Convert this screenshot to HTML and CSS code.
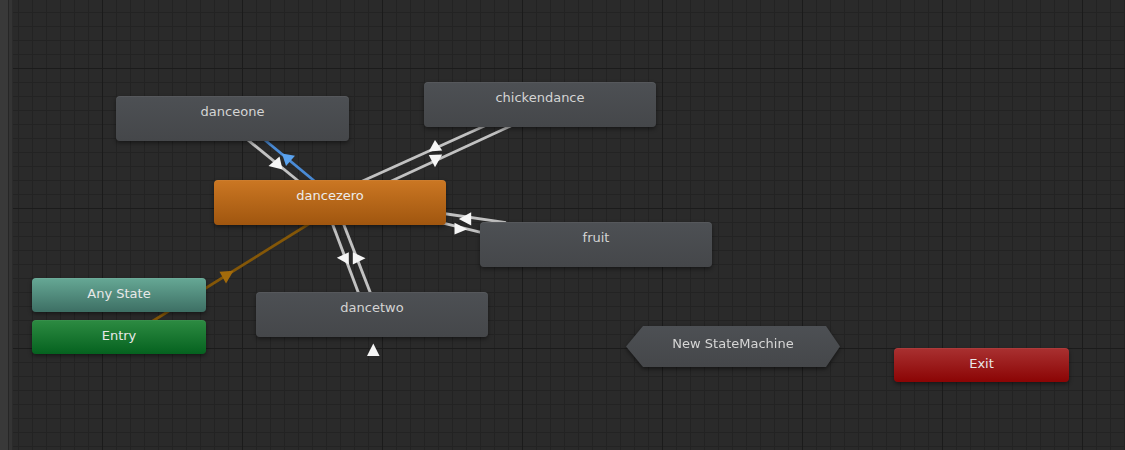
FILE: index.html
```html
<!DOCTYPE html>
<html lang="en">
<head>
<meta charset="utf-8">
<title>Animator</title>
<link rel="stylesheet" href="styles.css">
</head>
<body>
<div class="window">
  <div class="sidebar"></div>
  <div class="canvas">
    <svg class="edges" width="1112" height="450" viewBox="13 0 1112 450" xmlns="http://www.w3.org/2000/svg">
      <g class="line-gray">
        <line x1="243" y1="136" x2="302" y2="184"/>
        <line x1="356" y1="184" x2="491" y2="123"/>
        <line x1="385" y1="184" x2="517" y2="123"/>
        <line x1="440" y1="213" x2="506" y2="222.6"/>
        <line x1="430" y1="219.8" x2="486" y2="233.6"/>
        <line x1="331" y1="220" x2="360" y2="297"/>
        <line x1="342" y1="220" x2="372" y2="297"/>
      </g>
      <line class="line-blue" x1="260" y1="136" x2="318" y2="184"/>
      <line class="line-orange" x1="312" y1="222" x2="148" y2="324"/>
      <g class="arrow-white">
        <polygon points="268.5,166 279.5,156.5 282.5,169.5"/>
        <polygon points="428.8,151.5 435,140 442.2,150.5"/>
        <polygon points="428.8,155 442.2,154.4 435,167.2"/>
        <polygon points="458.8,219 471.2,212.2 471.2,225.5"/>
        <polygon points="454.5,222.8 454.5,234.5 467.2,229.3"/>
        <polygon points="336.8,257.8 348.8,252.2 348.8,264.5"/>
        <polygon points="365.5,258.3 352.8,252.2 352.8,264.5"/>
        <polygon points="373.3,343.5 367,356 379.6,356"/>
      </g>
      <polygon class="arrow-blue" points="282,153.5 295,155.8 286,166"/>
      <polygon class="arrow-orange" points="219.5,271.8 233.5,270.8 226,283.5"/>
    </svg>

    <div class="node state" style="left:103px;top:96px;width:233px">danceone</div>
    <div class="node state" style="left:411px;top:82px">chickendance</div>
    <div class="node state default" style="left:201px;top:180px">dancezero</div>
    <div class="node state" style="left:467px;top:222px">fruit</div>
    <div class="node state" style="left:243px;top:292px">dancetwo</div>
    <div class="node small any" style="left:19px;top:278px">Any State</div>
    <div class="node small entry" style="left:19px;top:320px">Entry</div>
    <div class="node small exit" style="left:881px;top:348px;width:175px">Exit</div>
    <div class="machine-wrap" style="left:613px;top:326px">
      <div class="machine">New StateMachine</div>
    </div>
  </div>
</div>
</body>
</html>
```
FILE: styles.css
```css
* { box-sizing: border-box; }
html, body {
  margin: 0;
  padding: 0;
  width: 1125px;
  height: 450px;
  overflow: hidden;
  background: #2a2a2a;
  font-family: "DejaVu Sans", "Verdana", sans-serif;
}
.window {
  display: flex;
  width: 1125px;
  height: 450px;
}
.sidebar {
  width: 13px;
  flex: 0 0 13px;
  background: linear-gradient(to right,
    #393939 0, #393939 8px,
    #262626 8px, #262626 9px,
    #343434 9px, #343434 12px,
    #2b2b2b 12px, #2b2b2b 13px);
}
.canvas {
  position: relative;
  flex: 1;
  height: 450px;
  background-color: #2a2a2a;
  background-image:
    linear-gradient(to right, #1b1b1b 0, #1b1b1b 1px, transparent 1px),
    linear-gradient(to bottom, #1b1b1b 0, #1b1b1b 1px, transparent 1px),
    linear-gradient(to right, #232323 0, #232323 1px, transparent 1px),
    linear-gradient(to bottom, #232323 0, #232323 1px, transparent 1px);
  background-size: 140px 140px, 140px 140px, 14px 14px, 14px 14px;
  background-position: 89px 68px, 89px 68px, 89px 68px, 89px 68px;
  overflow: hidden;
}
.edges {
  position: absolute;
  left: 0;
  top: 0;
}
.line-gray line {
  stroke: #c2c2c2;
  stroke-width: 2.9;
}
.line-blue {
  stroke: #4a8bd6;
  stroke-width: 2.9;
}
.line-orange {
  stroke: #845708;
  stroke-width: 2.7;
}
.arrow-white polygon { fill: #f6f6f6; }
.arrow-blue { fill: #5aa2ee; }
.arrow-orange { fill: #a36b0b; }

.node {
  position: absolute;
  border-radius: 4px;
  text-align: center;
  font-size: 13px;
  line-height: 16px;
  padding-top: 8px;
  box-shadow: 0 2px 4px rgba(0, 0, 0, 0.45), inset 0 1px 0 rgba(255, 255, 255, 0.05);
}
.state {
  width: 232px;
  height: 45px;
  color: #d4d4d4;
  background: linear-gradient(to bottom, #4d5054 0, #45474a 100%);
}
.state.default {
  color: #ececec;
  background: linear-gradient(to bottom, #cb7723 0, #a0560f 100%);
}
.small {
  width: 174px;
  height: 34px;
  color: #e8e8e8;
}
.any {
  background: linear-gradient(to bottom, #66a895 0, #3d6f64 100%);
}
.entry {
  background: linear-gradient(to bottom, #2d8b42 0, #05621f 100%);
}
.exit {
  background: linear-gradient(to bottom, #a93131 0, #8b0404 100%);
}
.machine-wrap {
  position: absolute;
  width: 214px;
  height: 41px;
  filter: drop-shadow(0 2px 2px rgba(0, 0, 0, 0.5));
}
.machine {
  width: 214px;
  height: 41px;
  padding-top: 10px;
  text-align: center;
  font-size: 13px;
  line-height: 16px;
  color: #d6d6d6;
  background: linear-gradient(to bottom, #4d5054 0, #45474a 100%);
  clip-path: polygon(17px 0, 200px 0, 214px 20.5px, 200px 41px, 17px 41px, 0 20.5px);
}
```
